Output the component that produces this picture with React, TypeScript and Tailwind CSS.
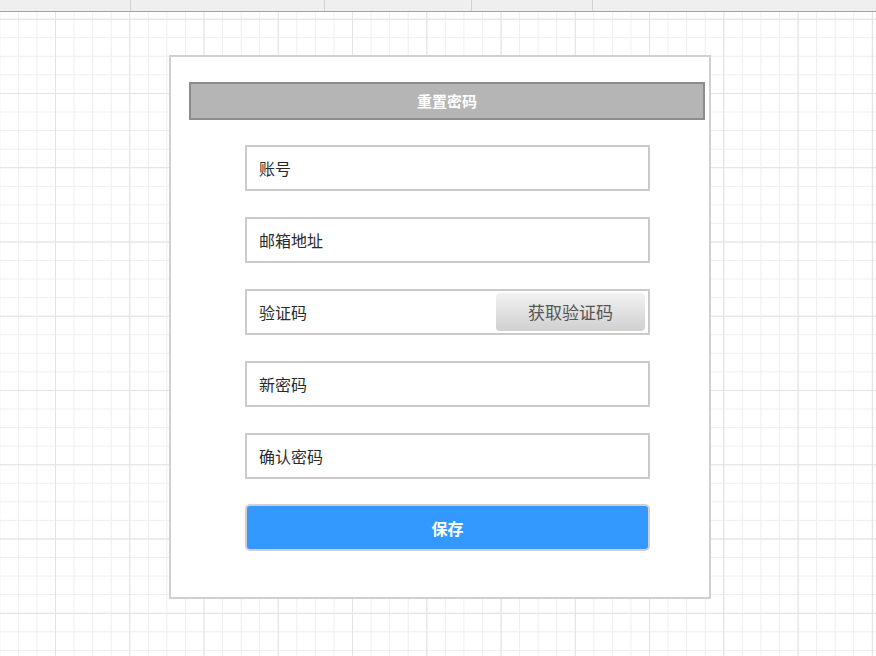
import React from "react";

const fields = ["账号", "邮箱地址", "验证码", "新密码", "确认密码"];

export default function App() {
  return (
    <div
      className="relative w-[876px] h-[656px] overflow-hidden bg-white bg-[linear-gradient(to_right,#e3e3e3_1px,transparent_1px),linear-gradient(to_bottom,#e3e3e3_1px,transparent_1px),linear-gradient(to_right,#eeeeee_1px,transparent_1px),linear-gradient(to_bottom,#eeeeee_1px,transparent_1px)] bg-size-[74.28px_74.28px,74.28px_74.28px,18.57px_18.57px,18.57px_18.57px] bg-position-[55px_18.7px,55px_18.7px,17.9px_0.15px,17.9px_0.15px]"
      style={{ fontFamily: '"Noto Sans CJK SC", "Noto Sans", sans-serif' }}
    >
      {/* top bar */}
      <div className="flex h-[12px] bg-[#efefef] border-b border-[#a3a3a3]">
        <div className="w-[131px] border-r border-[#d2d2d2]" />
        <div className="w-[194px] border-r border-[#d2d2d2]" />
        <div className="w-[147px] border-r border-[#d2d2d2]" />
        <div className="w-[121px] border-r border-[#d2d2d2]" />
        <div className="flex-1" />
      </div>

      {/* card */}
      <div className="ml-[169px] mt-[43px] w-[542px] h-[544px] border-2 border-[#d0d0d0] bg-white">
        <div className="ml-[18px] mt-[25px] w-[516px] h-[38px] border-2 border-[#8c8c8c] bg-[#b5b5b5] flex items-center justify-center text-white text-[15px] font-bold">
          重置密码
        </div>

        <div className="ml-[74px] mt-[25px] w-[405px] flex flex-col gap-[26px]">
          {fields.map((f) => (
            <div
              key={f}
              className="h-[46px] border-2 border-[#cacaca] bg-white flex items-center justify-between pl-[12px] pr-[3px]"
            >
              <span className="text-[16px] text-[#2a2a2a]">{f}</span>
              {f === "验证码" && (
                <button className="w-[149px] h-[38px] rounded-[4px] bg-[linear-gradient(to_bottom,#f2f2f2,#d0d0d0)] text-[17px] text-[#555555] flex items-center justify-center">
                  获取验证码
                </button>
              )}
            </div>
          ))}

          <button className="h-[47px] -mt-[1px] rounded-[5px] border-2 border-[#d0d0d0] bg-[#3399ff] text-white text-[16px] font-bold flex items-center justify-center">
            保存
          </button>
        </div>
      </div>
    </div>
  );
}
